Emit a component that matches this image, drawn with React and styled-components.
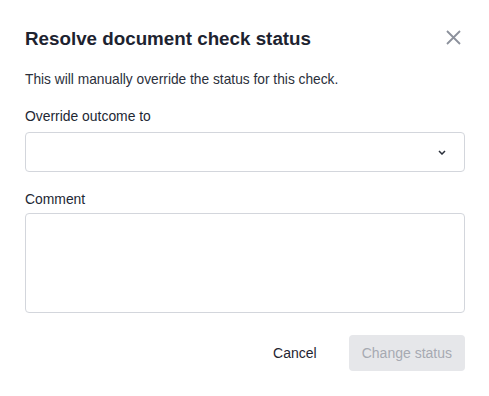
import React, { useState } from "react";
import styled, { createGlobalStyle } from "styled-components";

const GlobalStyle = createGlobalStyle`
  html, body {
    margin: 0;
    background: #ffffff;
  }
  body {
    font-family: "Liberation Sans", Arial, sans-serif;
    color: #1f2430;
  }
`;

const Modal = styled.div`
  width: 489px;
  height: 396px;
  box-sizing: border-box;
  padding: 27px 24px 0 25px;
  background: #fff;
  display: flex;
  flex-direction: column;
`;

const Header = styled.div`
  display: flex;
  align-items: flex-start;
  justify-content: space-between;
`;

const Title = styled.h1`
  margin: 0;
  font-size: 18.8px;
  line-height: 24px;
  font-weight: 700;
  color: #1d2330;
`;

const CloseButton = styled.button`
  border: none;
  background: none;
  padding: 0;
  width: 16px;
  height: 16px;
  margin: 2px 4px 0 0;
  display: flex;
  align-items: center;
  justify-content: center;
  cursor: pointer;
`;

const Description = styled.p`
  margin: 20px 0 0;
  font-size: 13.75px;
  line-height: 18px;
  color: #2b303b;
`;

const Field = styled.div`
  display: flex;
  flex-direction: column;
  margin-top: ${(p) => p.$gap}px;
`;

const Label = styled.label`
  font-size: 13.9px;
  line-height: 18px;
  color: #222733;
  margin-bottom: ${(p) => p.$space}px;
`;

const SelectBox = styled.div`
  height: 40px;
  box-sizing: border-box;
  border: 1px solid #d3d6dc;
  border-radius: 4px;
  display: flex;
  align-items: center;
  justify-content: flex-end;
  padding-right: 18px;
`;

const TextArea = styled.textarea`
  height: 100px;
  box-sizing: border-box;
  border: 1px solid #d3d6dc;
  border-radius: 4px;
  resize: none;
  font-family: inherit;
  font-size: 13px;
  outline: none;
`;

const Footer = styled.div`
  display: flex;
  justify-content: flex-end;
  align-items: center;
  gap: 32px;
  margin-top: 22px;
`;

const Button = styled.button`
  height: 36px;
  border: none;
  border-radius: 4px;
  font-family: inherit;
  font-size: 14px;
  padding: 0 ${(p) => (p.$primary ? 13 : 0)}px;
  background: ${(p) => (p.$primary ? "#e6e7ea" : "transparent")};
  color: ${(p) => (p.$primary ? "#a6aab2" : "#1f2430")};
  cursor: ${(p) => (p.disabled ? "default" : "pointer")};
`;

export default function App() {
  const [comment, setComment] = useState("");

  return (
    <>
      <GlobalStyle />
      <Modal>
        <Header>
          <Title>Resolve document check status</Title>
          <CloseButton aria-label="Close">
            <svg width="15" height="15" viewBox="0 0 15 15">
              <path d="M1 1 L14 14 M14 1 L1 14" stroke="#8c919c" strokeWidth="1.8" />
            </svg>
          </CloseButton>
        </Header>
        <Description>This will manually override the status for this check.</Description>
        <Field $gap={18}>
          <Label $space={7}>Override outcome to</Label>
          <SelectBox>
            <svg width="8" height="5" viewBox="0 0 8 5">
              <path d="M1 1 L4 4 L7 1" fill="none" stroke="#2a2f3a" strokeWidth="1.5" />
            </svg>
          </SelectBox>
        </Field>
        <Field $gap={18}>
          <Label $space={5}>Comment</Label>
          <TextArea value={comment} onChange={(e) => setComment(e.target.value)} />
        </Field>
        <Footer>
          <Button>Cancel</Button>
          <Button $primary disabled={!comment}>
            Change status
          </Button>
        </Footer>
      </Modal>
    </>
  );
}
